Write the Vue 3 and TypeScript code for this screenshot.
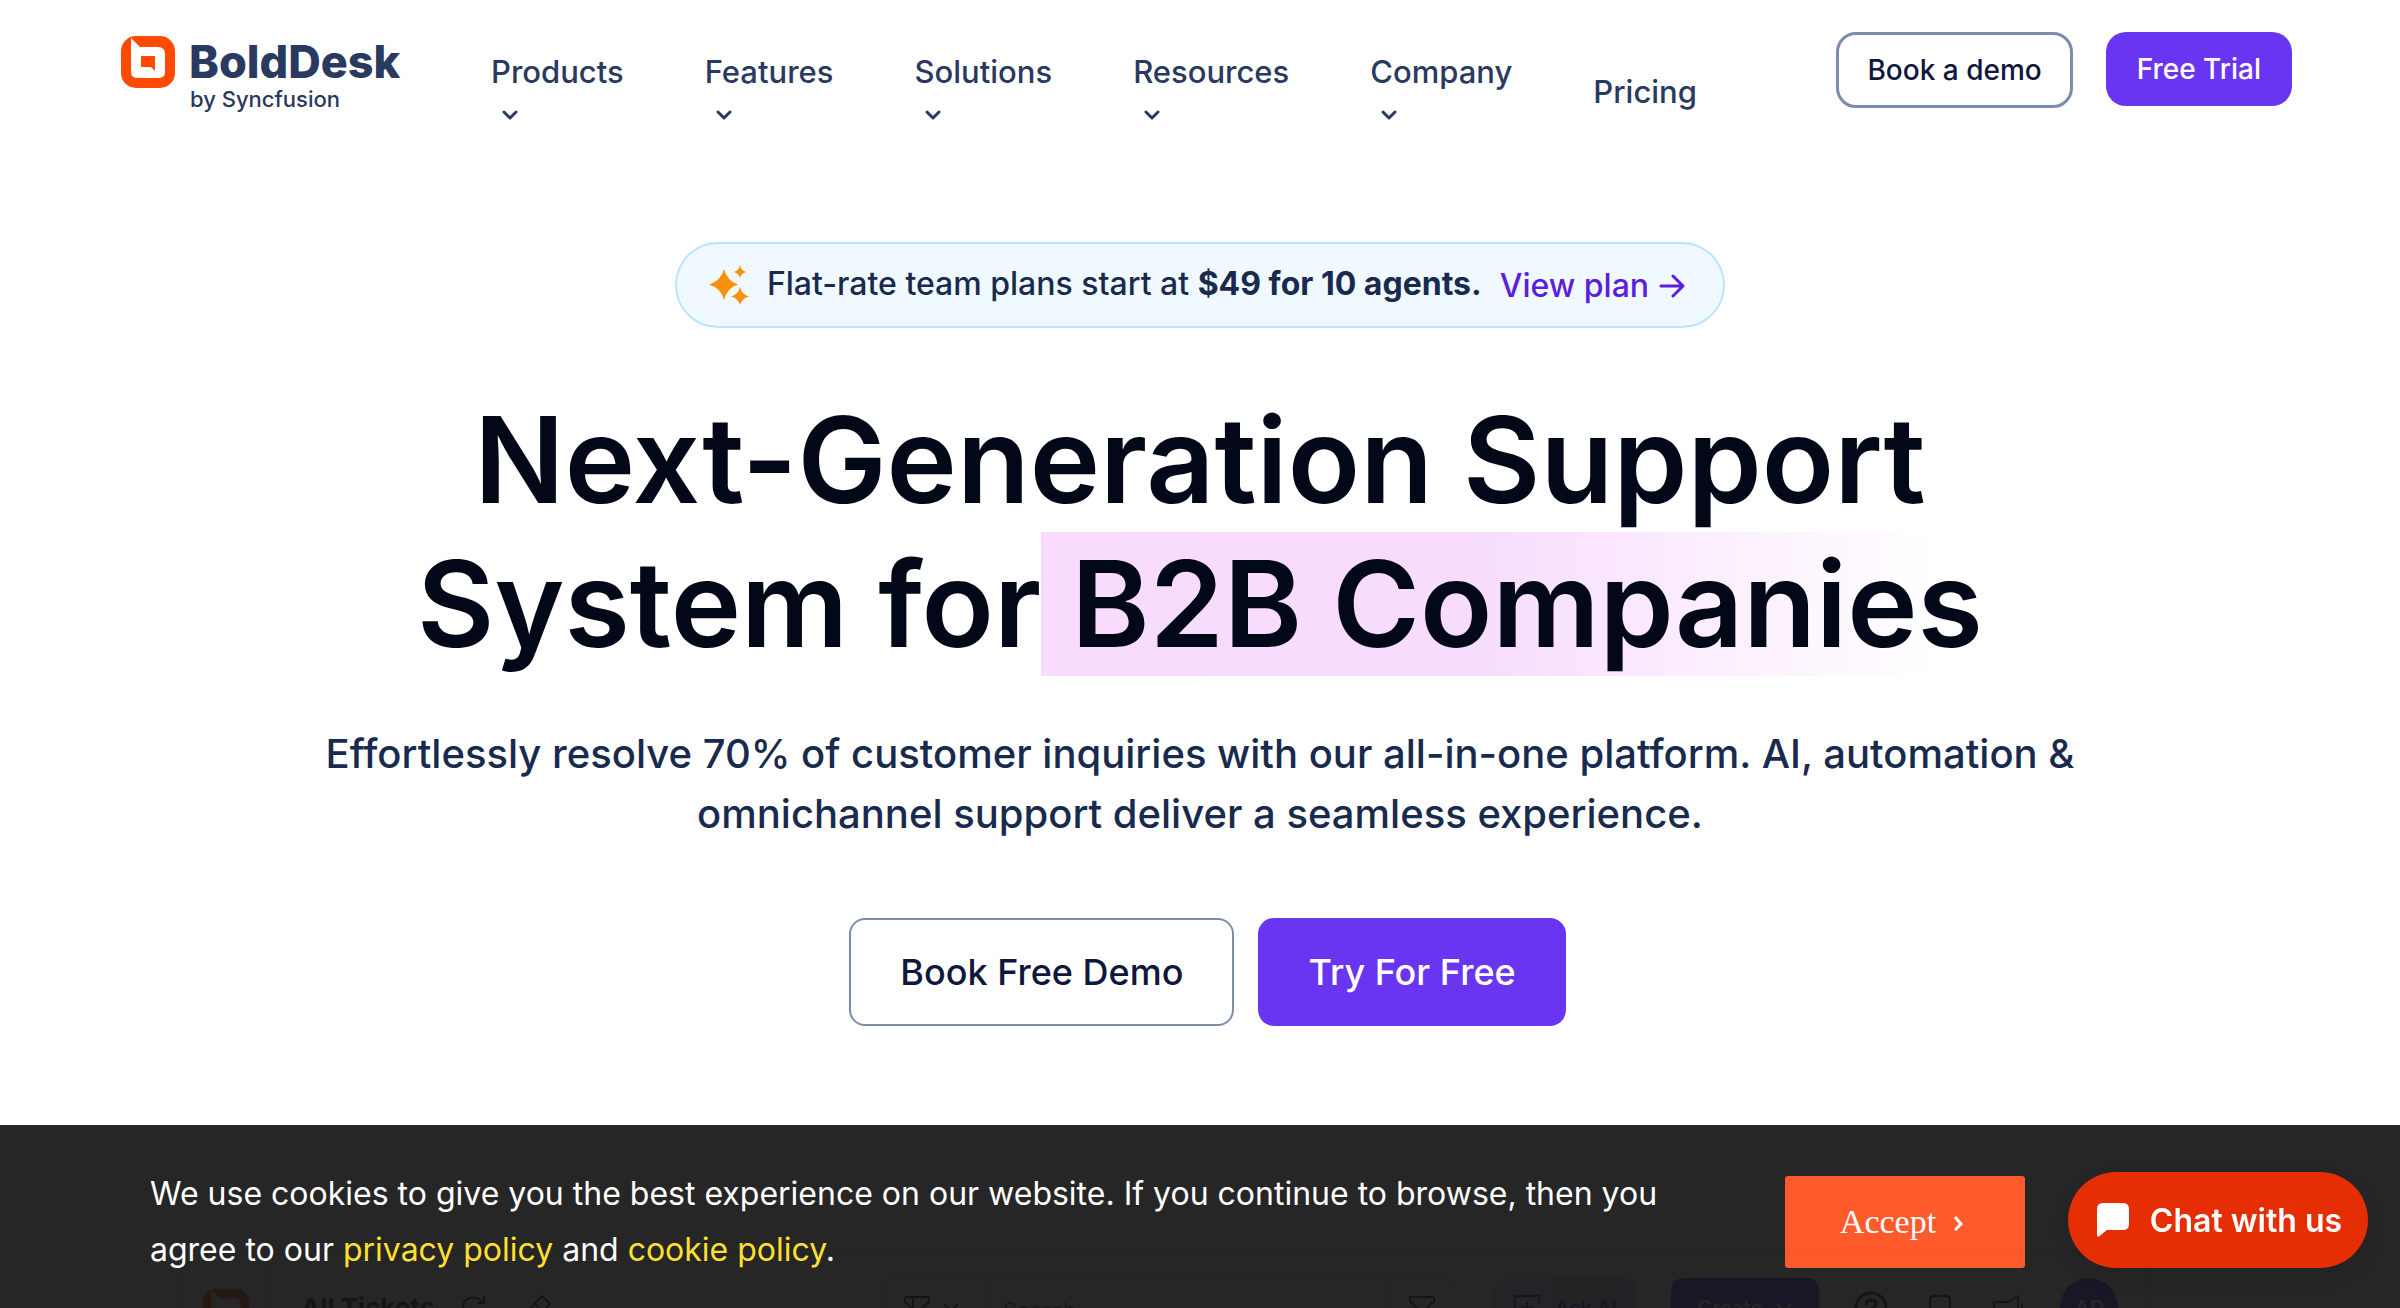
<script setup lang="ts">
interface NavItem {
  label: string
  menu: boolean
}

const navItems: NavItem[] = [
  { label: 'Products', menu: true },
  { label: 'Features', menu: true },
  { label: 'Solutions', menu: true },
  { label: 'Resources', menu: true },
  { label: 'Company', menu: true },
  { label: 'Pricing', menu: false },
]
</script>

<template>
  <div class="page">
    <header class="header">
      <a class="logo" href="#" aria-label="BoldDesk by Syncfusion">
        <svg class="logo-mark" viewBox="0 0 54 52" aria-hidden="true">
          <rect width="54" height="52" rx="15" fill="#ff4a00" />
          <path d="M10 2 L19 11 H37 Q44 11 44 18 V36 Q44 42 37 42 H17 Q10 42 10 36 Z" fill="#fff" />
          <path d="M20 20 H34 V35 L30 31 H20 Z" fill="#ff4a00" />
        </svg>
        <span class="logo-text">
          <span class="logo-name">BoldDesk</span>
          <span class="logo-by">by Syncfusion</span>
        </span>
      </a>
      <nav class="nav" aria-label="Main">
        <a v-for="item in navItems" :key="item.label" class="nav-item" href="#">
          <span>{{ item.label }}</span>
          <span v-if="item.menu" class="nav-caret">
            <svg width="16" height="10" viewBox="0 0 16 10" aria-hidden="true">
              <path d="M2 2 L8 8 L14 2" fill="none" stroke="#29395f" stroke-width="3" stroke-linecap="round" stroke-linejoin="round" />
            </svg>
          </span>
        </a>
      </nav>
      <div class="header-actions">
        <button class="btn-demo" type="button">Book a demo</button>
        <button class="btn-trial" type="button">Free Trial</button>
      </div>
    </header>

    <main class="hero">
      <div class="offer">
        <svg class="offer-icon" width="40" height="40" viewBox="0 0 40 40" aria-hidden="true">
          <g fill="#f98f0b">
            <path d="M15 4 Q18 16 29 19.500 Q18 23 15 35 Q12 23 0 19.500 Q12 16 15 4 Z" />
            <path d="M31 0 Q32 5.500 37 7 Q32 8.500 31 13 Q30 8.500 25 7 Q30 5.500 31 0 Z" />
            <path d="M31 22 Q33 30 40 31.500 Q33 33 31 40 Q29 33 22 31.500 Q29 30 31 22 Z" />
          </g>
        </svg>
        <span class="offer-text">Flat-rate team plans start at <strong>$49 for 10 agents.</strong></span>
        <a class="offer-link" href="#">
          <span>View plan</span>
          <svg width="26" height="24" viewBox="0 0 26 24" aria-hidden="true">
            <path d="M2 12 H24 M14 2 L24 12 L14 22" fill="none" stroke="#5b1ee0" stroke-width="3" stroke-linecap="round" stroke-linejoin="round" />
          </svg>
        </a>
      </div>
      <h1 class="title">Next-Generation Support<br />System for<span class="highlight"> B2B Companies</span></h1>
      <p class="subtitle">Effortlessly resolve 70% of customer inquiries with our all-in-one platform. AI, automation &amp; omnichannel support deliver a seamless experience.</p>
      <div class="hero-actions">
        <button class="btn-outline" type="button">Book Free Demo</button>
        <button class="btn-solid" type="button">Try For Free</button>
      </div>
    </main>

    <section class="preview" aria-label="Ticket list preview">
      <div class="preview-side">
        <svg width="46" height="46" viewBox="0 0 54 52" aria-hidden="true">
          <rect width="54" height="52" rx="15" fill="#ff4a00" />
          <path d="M10 2 L19 11 H37 Q44 11 44 18 V36 Q44 42 37 42 H17 Q10 42 10 36 Z" fill="#fff" />
        </svg>
      </div>
      <div class="preview-bar">
        <strong class="preview-title">All Tickets</strong>
        <svg class="preview-refresh" width="26" height="28" viewBox="0 0 26 28" aria-hidden="true">
          <path d="M23 18 A10.500 10.500 0 1 1 22 8 M24 2 V9 H17" fill="none" stroke="#1f2937" stroke-width="2" />
        </svg>
        <svg class="preview-clear" width="26" height="28" viewBox="0 0 26 28" aria-hidden="true">
          <path d="M16 2 L24 10 L10 25 L2 17 Z M9 10 L17 18" fill="none" stroke="#1f2937" stroke-width="2" />
        </svg>
        <div class="preview-search">
          <span class="preview-scope">
            <svg width="28" height="26" viewBox="0 0 28 26" aria-hidden="true">
              <path d="M2 2 H26 V7 L18 14 V24 M2 2 V7 L10 14 V24 M10 2 V14" fill="none" stroke="#1f2937" stroke-width="2" />
            </svg>
            <svg width="16" height="10" viewBox="0 0 16 10" aria-hidden="true">
              <path d="M1 1 L8 8 L15 1" fill="none" stroke="#1f2937" stroke-width="2" />
            </svg>
          </span>
          <span class="preview-query">Search</span>
          <span class="preview-filter">
            <svg width="28" height="26" viewBox="0 0 28 26" aria-hidden="true">
              <path d="M2 2 H26 V6 L17 15 V24 H11 V15 L2 6 Z" fill="none" stroke="#1f2937" stroke-width="2" />
            </svg>
          </span>
        </div>
        <span class="preview-ask">
          <svg width="28" height="28" viewBox="0 0 28 28" aria-hidden="true">
            <path d="M26 10 V2 H2 V26 H26 V18 M14 8 V20 M8 14 H20" fill="none" stroke="#5b1ee0" stroke-width="2" />
          </svg>
          Ask AI
        </span>
        <span class="preview-create">
          Create
          <svg width="16" height="10" viewBox="0 0 16 10" aria-hidden="true">
            <path d="M1 1 L8 8 L15 1" fill="none" stroke="#fff" stroke-width="2" />
          </svg>
        </span>
        <svg class="preview-help" width="34" height="34" viewBox="0 0 34 34" aria-hidden="true">
          <g fill="none" stroke="#1f2937" stroke-width="3">
            <circle cx="17" cy="17" r="15" />
            <path d="M12 14 Q12 9 17 9 Q22 9 22 13 Q22 16 17 18 V21 M17 24 V27" />
          </g>
        </svg>
        <svg class="preview-device" width="24" height="32" viewBox="0 0 24 32" aria-hidden="true">
          <path d="M2 24 V6 Q2 2 6 2 H18 Q22 2 22 6 V24 Z" fill="none" stroke="#1f2937" stroke-width="2" />
        </svg>
        <svg class="preview-news" width="32" height="32" viewBox="0 0 32 32" aria-hidden="true">
          <path d="M2 8 H16 L26 2 V28 L16 22 H2 Z M30 10 V20" fill="none" stroke="#1f2937" stroke-width="2" />
        </svg>
        <span class="preview-avatar">AP</span>
      </div>
    </section>

    <aside class="cookies" aria-label="Cookie notice">
      <p class="cookies-text">
        We use cookies to give you the best experience on our website. If you continue to browse, then you agree to our
        <a href="#">privacy policy</a> and <a href="#">cookie policy</a>.
      </p>
      <button class="cookies-accept" type="button">
        Accept
        <svg width="12" height="18" viewBox="0 0 12 18" aria-hidden="true">
          <path d="M3 4 L9 11 L3 17" fill="none" stroke="#fff" stroke-width="3" />
        </svg>
      </button>
    </aside>

    <button class="chat" type="button">
      <svg width="34" height="36" viewBox="0 0 34 36" aria-hidden="true">
        <path d="M7 1 H27 Q33 1 33 7 V22 Q33 28 27 28 H11 L3 34.500 Q1 35.500 1 33 V7 Q1 1 7 1 Z" fill="#fff" />
      </svg>
      Chat with us
    </button>
  </div>
</template>

<style>
body {
  margin: 0;
  background: #fff;
}
</style>

<style scoped>
* {
  box-sizing: border-box;
}

.page {
  display: flex;
  flex-direction: column;
  height: 100vh;
  overflow: hidden;
  font-family: Inter, sans-serif;
  font-optical-sizing: none;
  color: #182a4e;
}

a {
  color: inherit;
  text-decoration: none;
}

button {
  padding: 0;
  border: 0;
  font: inherit;
  font-weight: 500;
  cursor: pointer;
}

.header {
  display: flex;
  align-items: flex-start;
  padding: 32px 108px 0 121px;
}

.logo {
  display: flex;
  gap: 14px;
  padding-top: 4px;
  color: #29395f;
}

.logo-mark {
  width: 54px;
  height: 52px;
}

.logo-text {
  display: flex;
  flex-direction: column;
  width: 217px;
}

.logo-name {
  font-size: 45px;
  font-weight: 800;
  line-height: 52px;
}

.logo-by {
  padding-left: 1px;
  font-size: 22px;
  font-weight: 500;
  line-height: 22px;
}

.nav {
  display: flex;
  align-items: center;
  gap: 81px;
  margin-left: 85px;
  font-size: 31px;
  font-weight: 500;
  line-height: 40px;
  color: #29395f;
}

.nav-item {
  display: flex;
  flex-direction: column;
  padding-top: 20px;
}

.nav-caret {
  display: flex;
  align-items: center;
  height: 40px;
  padding: 6px 0 0 11px;
}

.header-actions {
  display: flex;
  align-items: flex-start;
  gap: 33px;
  margin-left: auto;
}

.btn-demo,
.btn-trial {
  height: 76px;
  border-radius: 20px;
  font-size: 28px;
}

.btn-demo {
  padding: 0 28px;
  border: 3px solid #7b8cad;
  background: #fff;
  color: #0f173d;
}

.btn-trial {
  height: 74px;
  padding: 0 31px;
  background: #6935f1;
  color: #fff;
}

.hero {
  display: flex;
  flex-direction: column;
  align-items: center;
  padding-top: 110px;
}

.offer {
  display: flex;
  align-items: center;
  height: 86px;
  padding: 0 38px 0 32px;
  border: 2px solid #bae6fd;
  border-radius: 43px;
  background: #f0f9ff;
  font-size: 32px;
  font-weight: 500;
  line-height: 40px;
}

.offer-text {
  margin-left: 18px;
  padding-bottom: 2px;
}

.offer-text strong {
  font-weight: 700;
}

.offer-link {
  display: flex;
  align-items: center;
  gap: 10px;
  margin-left: 18px;
  padding-top: 2px;
  color: #5b1ee0;
}

.title {
  margin: 60px 0 0;
  font-size: 119px;
  font-weight: 600;
  line-height: 144px;
  text-align: center;
  color: #020818;
}

.highlight {
  background: linear-gradient(90deg, #f9dcfd 0%, #f7dcfd 45%, #fff 95%);
}

.subtitle {
  width: 1800px;
  max-width: 100%;
  margin: 48px 0 0;
  font-size: 40px;
  font-weight: 500;
  line-height: 60px;
  text-align: center;
}

.hero-actions {
  display: flex;
  gap: 24px;
  margin: 74px 0 0 15px;
}

.btn-outline,
.btn-solid {
  height: 108px;
  padding: 0 50px;
  border-radius: 16px;
  font-size: 36px;
}

.btn-outline {
  padding: 0 49px;
  border: 2px solid #7b8cad;
  background: #fff;
  color: #0f173d;
}

.btn-solid {
  background: #6935f1;
  color: #fff;
}

.preview {
  display: flex;
  flex: 1;
  min-height: 0;
  margin: 228px 252px 0 181px;
  border: 2px solid #d8dce3;
  border-bottom: 0;
  border-radius: 16px 16px 0 0;
  box-shadow: 0 0 24px #d8dce3;
}

.preview-side {
  width: 88px;
  padding: 32px 20px 0;
  border-right: 2px solid #e5e7eb;
}

.preview-bar {
  display: flex;
  flex: 1;
  align-items: flex-start;
  padding: 22px 28px 0 30px;
  font-size: 26px;
  line-height: 60px;
}

.preview-title {
  margin-right: 26px;
}

.preview-refresh,
.preview-clear,
.preview-device,
.preview-news {
  margin-top: 16px;
}

.preview-clear {
  margin-left: 40px;
}

.preview-search {
  display: flex;
  width: 576px;
  height: 60px;
  margin-left: auto;
  border: 2px solid #d8dce3;
  border-radius: 10px;
}

.preview-scope {
  display: flex;
  align-items: center;
  gap: 12px;
  width: 104px;
  padding-left: 20px;
  border-right: 2px solid #d8dce3;
}

.preview-query {
  flex: 1;
  padding-left: 16px;
  font-size: 22px;
  color: #6b7280;
}

.preview-filter {
  display: flex;
  align-items: center;
  justify-content: center;
  width: 68px;
  border-left: 2px solid #d8dce3;
}

.preview-ask,
.preview-create {
  display: flex;
  align-items: center;
  justify-content: center;
  gap: 14px;
  height: 60px;
  border-radius: 12px;
  font-size: 20px;
  font-weight: 600;
}

.preview-ask {
  width: 144px;
  margin-left: 36px;
  background: linear-gradient(90deg, #c8e8ec, #e0c8f4);
  color: #5b1ee0;
}

.preview-create {
  width: 148px;
  margin-left: 34px;
  background: #6935f1;
  color: #fff;
}

.preview-help {
  margin: 13px 40px 0 35px;
}

.preview-news {
  margin-left: 40px;
}

.preview-avatar {
  width: 58px;
  height: 58px;
  margin-left: 36px;
  border-radius: 29px;
  background: #6935f1;
  color: #fff;
  font-size: 22px;
  font-weight: 600;
  text-align: center;
}

.cookies {
  position: fixed;
  right: 0;
  bottom: 0;
  left: 0;
  display: flex;
  align-items: flex-start;
  justify-content: space-between;
  padding: 0 375px 30px 150px;
  background: #141414;
  color: #fff;
  opacity: 0.92;
}

.cookies-text {
  flex: 0 1 1540px;
  margin: 41px 0 0;
  font-size: 32px;
  line-height: 56px;
}

.cookies-text a {
  color: #ffde21;
}

.cookies-accept {
  display: flex;
  align-items: center;
  justify-content: center;
  gap: 16px;
  width: 240px;
  height: 92px;
  margin: 51px 0 10px;
  padding-right: 6px;
  border-radius: 3px;
  background: #ff4c1b;
  color: #fff;
  font-family: "Liberation Serif", serif;
  font-size: 34px;
  font-weight: 400;
}

.chat {
  position: fixed;
  right: 32px;
  bottom: 40px;
  display: flex;
  align-items: center;
  justify-content: center;
  gap: 20px;
  width: 300px;
  height: 96px;
  padding-left: 2px;
  border-radius: 48px;
  background: #e62e05;
  box-shadow: 0 8px 20px #0000001a;
  color: #fff;
  font-size: 32px;
  font-weight: 600;
}
</style>
